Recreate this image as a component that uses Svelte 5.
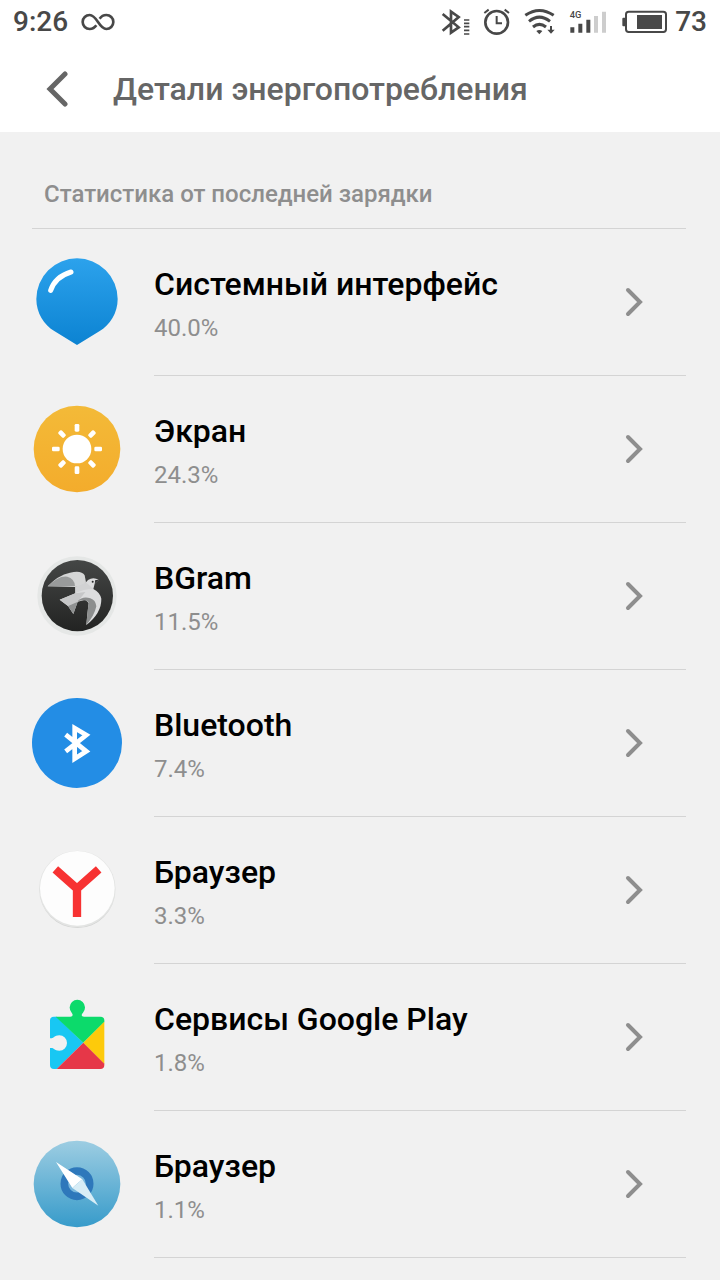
<script lang="ts">
	type App = { icon: string; name: string; percent: string };

	export let title: string = 'Детали энергопотребления';
	export let time: string = '9:26';
	export let battery: number = 73;

	// apps sorted by how much of the charge they used
	export let apps: App[] = [
		{ icon: 'system', name: 'Системный интерфейс', percent: '40.0%' },
		{ icon: 'screen', name: 'Экран', percent: '24.3%' },
		{ icon: 'bgram', name: 'BGram', percent: '11.5%' },
		{ icon: 'bluetooth', name: 'Bluetooth', percent: '7.4%' },
		{ icon: 'yandex', name: 'Браузер', percent: '3.3%' },
		{ icon: 'play', name: 'Сервисы Google Play', percent: '1.8%' },
		{ icon: 'compass', name: 'Браузер', percent: '1.1%' }
	];

	const rays = [0, 45, 90, 135, 180, 225, 270, 315];
</script>

<div class="page">
	<header>
		<div class="status">
			<span class="time">{time}</span>
			<svg class="infinity" width="34" height="18" viewBox="0 0 102 54" fill="none" stroke="#484848" stroke-width="8">
				<path d="M46 37C40 46 34 48 26 48A21 21 0 0 1 26 6C48 6 54 48 76 48A21 21 0 0 0 76 6C68 6 62 8 56 17" />
			</svg>
			<!-- bluetooth, alarm, wifi, signal and battery share one strip -->
			<svg class="indicators" width="228" height="30" viewBox="33 21 684 90" fill="none" stroke="#484848">
				<path d="M38 42L86 82L63 98V35L86 51L38 92" stroke-width="8" />
				<path d="M102 60H118M102 70H118M102 80H118M102 91H118M102 102H118" stroke-width="5" />
				<circle cx="200" cy="67" r="34" stroke-width="8" />
				<path d="M200 48V70H216" stroke-width="6" />
				<path d="M163 39L176 29M237 39L224 29" stroke-width="6" />
				<path d="M286 46Q328 17 371 46M297 64Q328 39 360 64M309 81Q328 65 348 81" stroke-width="9" />
				<path d="M319 93Q328 87 337 93L328 103Z" fill="#484848" stroke="none" />
				<path d="M363 78V91" stroke-width="6" />
				<path d="M352 89H374L363 101Z" fill="#484848" stroke="none" />
				<path d="M427 82V98M451 71V98M475 59V98" stroke-width="12" />
				<path d="M498 48V98M522 35V98" stroke="#cdcdcd" stroke-width="12" />
				<text x="419" y="54" font-size="28">4G</text>
				<rect x="588" y="35" width="120" height="61" rx="8" stroke-width="6" />
				<path d="M587 53H580Q577 53 577 57V75Q577 79 580 79H587Z" fill="#484848" stroke="none" />
				<rect x="621" y="45" width="75" height="42" fill="#484848" stroke="none" />
			</svg>
			<span class="battery">{battery}</span>
		</div>
		<div class="title">
			<button class="back" aria-label="Назад">
				<svg width="22" height="36" viewBox="0 0 22 36" fill="none" stroke="#666" stroke-width="5">
					<path d="M19 3L4 18L19 33" stroke-linecap="round" />
				</svg>
			</button>
			<h1>{title}</h1>
		</div>
	</header>

	<main>
		<h2>Статистика от последней зарядки</h2>
		<ul>
			{#each apps as app}
				<li>
					<a href="#details">
						{#if app.icon === 'system'}
							<svg class="icon" viewBox="36 36 270 270">
								<defs>
									<linearGradient id="system-fill" x1="0" y1="0" x2="0" y2="1">
										<stop offset="0" stop-color="#2ca2ec" />
										<stop offset="1" stop-color="#0c83d2" />
									</linearGradient>
								</defs>
								<path d="M171 40A122 122 0 0 1 293 162C293 204 270 240 238 259L171 300L104 259C72 240 49 204 49 162A122 122 0 0 1 171 40Z" fill="url(#system-fill)" />
								<path d="M92 136Q106 95 153 81" fill="none" stroke="#fff" stroke-width="15" stroke-linecap="round" />
							</svg>
						{:else if app.icon === 'screen'}
							<svg class="icon" viewBox="36 27 270 270">
								<defs>
									<linearGradient id="screen-fill" x1="0" y1="0" x2="0" y2="1">
										<stop offset="0" stop-color="#f3ba38" />
										<stop offset="1" stop-color="#f3ac2c" />
									</linearGradient>
								</defs>
								<circle cx="171" cy="162" r="130" fill="url(#screen-fill)" />
								<circle cx="171" cy="162" r="43" fill="#fff" />
								{#each rays as angle}
									<rect x="164" y="87" width="14" height="23" rx="4" fill="#fff" transform="rotate({angle} 171 162)" />
								{/each}
							</svg>
						{:else if app.icon === 'bgram'}
							<svg class="icon" viewBox="21 18 270 270">
								<defs>
									<linearGradient id="bgram-fill" x1="0" y1="0" x2="0" y2="1">
										<stop offset="0" stop-color="#454746" />
										<stop offset="1" stop-color="#222322" />
									</linearGradient>
								</defs>
								<circle cx="156" cy="153" r="119" fill="#e5e7e6" />
								<circle cx="157" cy="152" r="107" fill="url(#bgram-fill)" />
								<path d="M68 124Q98 91 135 83Q170 75 179 91L183 112L173 120L151 126Z" fill="#d5d6d6" />
								<path d="M68 124Q101 91 127 95Q148 100 150 123Z" fill="#999b9b" />
								<path d="M183 112Q188 103 197 101Q211 98 221 105L209 116L205 132Q224 141 229 161Q230 204 184 240Q187 204 191 174L181 164L158 170L145 207L129 183L104 164L151 145V126Z" fill="#dcddde" />
								<path d="M104 164L151 145L181 141L158 170L129 183Z" fill="#c6c7c8" />
								<path d="M129 183L158 170L145 207Z" fill="#8f9191" />
								<path d="M184 240Q187 204 191 172Q181 161 158 169Q172 153 196 160Q212 165 214 184Q208 212 184 240Z" fill="#8c8e8e" />
								<path d="M151 126L183 112L205 132Q176 132 151 145Z" fill="#d1d2d3" />
								<circle cx="203" cy="110" r="3" fill="#292a2a" />
								<path d="M211 105L221 105L209 116Z" fill="#303131" />
							</svg>
						{:else if app.icon === 'bluetooth'}
							<svg class="icon" viewBox="21 24 270 270">
								<circle cx="156" cy="159" r="135" fill="#238de5" />
								<path d="M122 134L184 184L149 206V114L184 135L122 184" fill="none" stroke="#fff" stroke-width="14" />
							</svg>
						{:else if app.icon === 'yandex'}
							<svg class="icon" viewBox="21 15 270 270">
								<circle cx="157" cy="151" r="113" fill="#d2d3d2" />
								<circle cx="157" cy="147" r="115" fill="#e3e4e3" />
								<circle cx="157" cy="145" r="112" fill="#fdfdfd" />
								<path d="M91 88L156 146L221 88M156 142V231" fill="none" stroke="#f73232" stroke-width="25" />
							</svg>
						{:else if app.icon === 'play'}
							<svg class="icon" viewBox="21 6 270 270">
								<path d="M95 80L175 158L95 237H87Q75 237 75 225V174H80C87 174 87 182 103 182A23 23 0 0 0 103 136C87 136 87 145 80 145H75V91Q75 80 87 80Z" fill="#18c7f3" />
								<path d="M92 80H136Q143 80 143 75Q143 72 140 68A23 23 0 1 1 174 68Q170 72 170 76Q170 80 177 80H226Q238 80 238 91V96L175 158Z" fill="#0cda6b" />
								<path d="M238 95V222L175 158Z" fill="#fdca0b" />
								<path d="M95 237L175 158L238 221V225Q238 237 226 237Z" fill="#e63748" />
							</svg>
						{:else}
							<svg class="icon" viewBox="21 27 270 270">
								<defs>
									<linearGradient id="compass-fill" x1="0" y1="0" x2="0" y2="1">
										<stop offset="0" stop-color="#9dcde2" />
										<stop offset="1" stop-color="#379bca" />
									</linearGradient>
								</defs>
								<circle cx="156" cy="162" r="130" fill="url(#compass-fill)" />
								<circle cx="156" cy="161" r="38" fill="#79b7dc" stroke="#2e78bb" stroke-width="23" />
								<path d="M93 96L172 148L156 161L142 174Z" fill="#fff" />
								<path d="M220 227L142 174L156 161L172 148Z" fill="#d8edf6" />
							</svg>
						{/if}
						<div class="row">
							<div class="text">
								<span class="name">{app.name}</span>
								<span class="percent">{app.percent}</span>
							</div>
							<svg class="chevron" width="20" height="30" viewBox="0 0 20 30" fill="none" stroke="#8e8e8e" stroke-width="4">
								<path d="M4 3L16 15L4 27" stroke-linecap="round" />
							</svg>
						</div>
					</a>
				</li>
			{/each}
		</ul>
	</main>
</div>

<style>
	:global(body) {
		background-color: #f1f1f1;
	}
	.page {
		font-family: Roboto, sans-serif;
		color: #000;
	}
	header {
		background-color: #fff;
	}
	.status {
		display: flex;
		align-items: center;
		height: 44px;
		padding: 0 13px;
		font-size: 28px;
		font-weight: 500;
		line-height: 44px;
		color: #484848;
	}
	.infinity {
		margin-left: 13px;
	}
	.indicators {
		margin-left: auto;
	}
	.indicators text {
		fill: #484848;
		stroke: none;
	}
	.battery {
		margin-left: 6px;
	}
	.title {
		display: flex;
		align-items: center;
		height: 88px;
		padding: 2px 46px 0;
		box-sizing: border-box;
	}
	.back {
		display: flex;
		padding: 0;
		border: none;
		background: none;
		cursor: pointer;
	}
	h1 {
		margin: 0 0 0 45px;
		font-size: 32px;
		font-weight: 500;
		line-height: 40px;
		color: #666;
	}
	main {
		padding: 44px 34px 0 32px;
	}
	h2 {
		margin: 0;
		padding: 0 12px 16px;
		border-bottom: 1px solid #d4d4d4;
		font-size: 24px;
		font-weight: 500;
		line-height: 36px;
		color: #8e8e8e;
	}
	ul {
		margin: 0;
		padding: 0;
		list-style: none;
	}
	a {
		display: flex;
		gap: 32px;
		color: inherit;
		text-decoration: none;
	}
	.icon {
		flex: none;
		width: 90px;
		height: 90px;
		margin-top: 28px;
	}
	.row {
		display: flex;
		flex: 1;
		align-items: center;
		justify-content: space-between;
		padding: 34px 42px 34px 0;
		border-bottom: 1px solid #d4d4d4;
	}
	.text {
		display: flex;
		flex-direction: column;
		gap: 10px;
	}
	.name {
		font-size: 32px;
		font-weight: 500;
		line-height: 42px;
	}
	.percent {
		font-size: 24px;
		line-height: 26px;
		color: #8e8e8e;
	}
	a:hover .name {
		color: #238de5;
	}
</style>
